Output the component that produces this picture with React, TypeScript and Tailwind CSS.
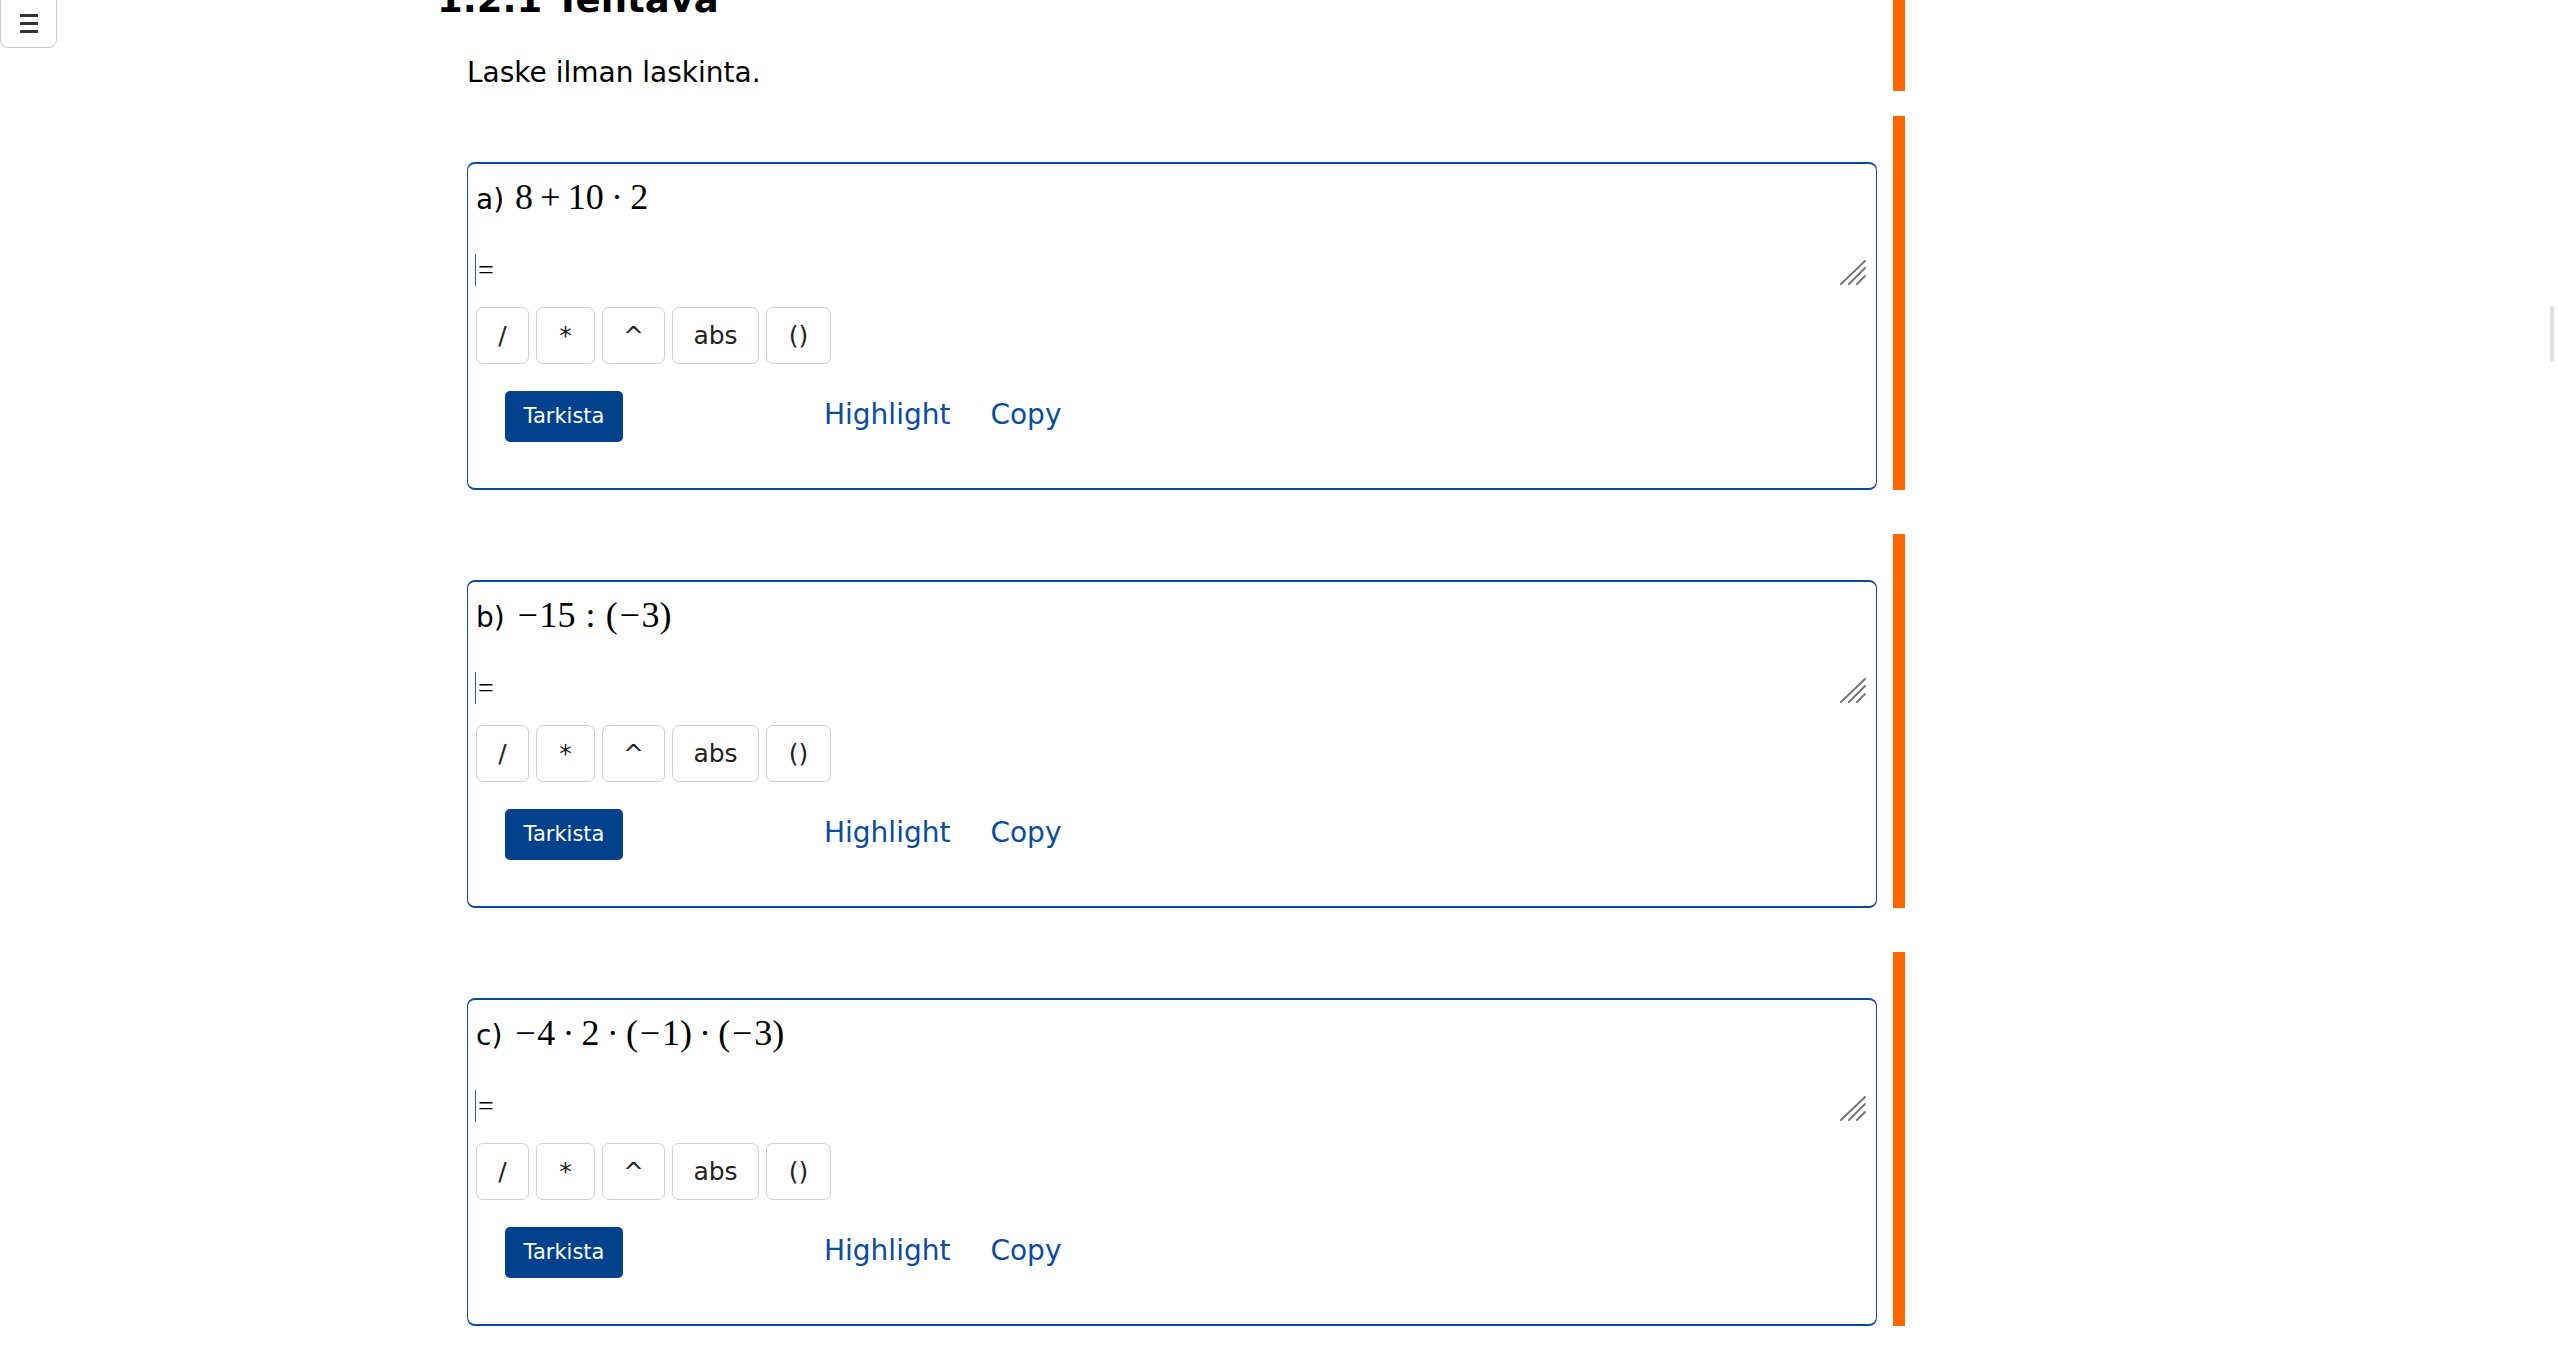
import type { ReactNode } from 'react'

const sans = { fontFamily: '"DejaVu Sans", Verdana, sans-serif' }

// binary operator with medium math spacing
function Bin({ children }: { children: ReactNode }) {
  return <span className="mx-[0.2em]">{children}</span>
}

function Rel({ children }: { children: ReactNode }) {
  return <span className="mx-[0.278em]">{children}</span>
}

function Minus() {
  return <span className="mx-[0.05em]">−</span>
}

function Grip() {
  return (
    <svg width="26" height="25" viewBox="0 0 26 25" className="block">
      <g stroke="#777" strokeWidth="2" strokeLinecap="round">
        <line x1="1" y1="24" x2="25" y2="1" />
        <line x1="9" y1="24" x2="25" y2="8" />
        <line x1="17" y1="24" x2="25" y2="16" />
      </g>
    </svg>
  )
}

const keys = [
  { k: '/', w: 'w-[53px]' },
  { k: '*', w: 'w-[59px]' },
  { k: '^', w: 'w-[63px]' },
  { k: 'abs', w: 'w-[87px]' },
  { k: '()', w: 'w-[65px]' },
]

function Exercise({ label, math, first }: { label: string; math: ReactNode; first?: boolean }) {
  return (
    <div
      className={`w-[1468px] border-r-[12px] border-[#ff6600] pt-[46px] ${first ? 'mt-[25px]' : 'mt-[44px]'}`}
    >
      <div className="ml-[30px] w-[1410px] h-[328px] border-x border-y-2 border-[#0b4a98] rounded-[8px] bg-white flex flex-col">
        {/* tehtävänanto */}
        <div className="pt-[11px] px-[8px] leading-[44px] text-[28px] text-black" style={sans}>
          {label}
          <span
            className="ml-[11px] text-[36px]"
            style={{ fontFamily: '"Liberation Serif", "Times New Roman", serif' }}
          >
            {math}
          </span>
        </div>

        {/* vastauskenttä */}
        <div className="mt-[28px] h-[40px] flex items-start justify-between pl-[7px] pr-[10px]">
          <div className="flex items-center h-[32px] mt-[4px]">
            <span className="w-[1px] h-[32px] bg-[#1a5fd0]" />
            <span
              className="ml-[2px] text-[28px] leading-none text-black"
              style={{ fontFamily: '"Liberation Serif", serif' }}
            >
              =
            </span>
          </div>
          <div className="mt-[10px]">
            <Grip />
          </div>
        </div>

        {/* näppäimet */}
        <div className="mt-[17px] pl-[8px] flex gap-[7px]" style={sans}>
          {keys.map(({ k, w }) => (
            <button
              key={k}
              className={`${w} h-[57px] flex items-center justify-center border border-[#d0d0d0] rounded-[7px] bg-white text-[25px] text-[#222]`}
            >
              {k}
            </button>
          ))}
        </div>

        <div className="mt-[27px] pl-[37px] flex items-center" style={sans}>
          <button className="w-[118px] h-[51px] rounded-[5px] bg-[#02418e] text-white text-[21px]">
            Tarkista
          </button>
          <a href="#" className="ml-[201px] mt-[-3px] text-[28px] text-[#0a4ca0]">
            Highlight
          </a>
          <a href="#" className="ml-[40px] mt-[-3px] text-[28px] text-[#0a4ca0]">
            Copy
          </a>
        </div>
      </div>
    </div>
  )
}

export default function App() {
  return (
    <div className="relative h-[1361px] overflow-hidden bg-white">
      {/* Valikko */}
      <button className="fixed top-0 left-0 w-[57px] h-[48px] border border-t-0 border-[#cccccc] rounded-b-[8px] bg-white flex flex-col items-center justify-center gap-[5px] z-10">
        <span className="w-[18px] h-[3px] bg-[#333]" />
        <span className="w-[18px] h-[3px] bg-[#333]" />
        <span className="w-[18px] h-[3px] bg-[#333]" />
      </button>

      <div className="ml-[437px] flex flex-col">
        {/* Otsikko ja ohje */}
        <div className="w-[1468px] h-[91px] flex flex-col border-r-[12px] border-[#ff6600]">
          <h2 className="mt-[-22px] text-[37px] leading-[44px] font-bold text-black" style={sans}>
            1.2.1 Tehtävä
          </h2>
          <p className="mt-[31px] pl-[30px] text-[28px] leading-[40px] text-black" style={sans}>
            Laske ilman laskinta.
          </p>
        </div>

        <Exercise
          first
          label="a)"
          math={
            <>
              8<Bin>+</Bin>10<Bin>·</Bin>2
            </>
          }
        />
        <Exercise
          label="b)"
          math={
            <>
              <Minus />
              15<Rel>:</Rel>(<Minus />3)
            </>
          }
        />
        <Exercise
          label="c)"
          math={
            <>
              <Minus />
              4<Bin>·</Bin>2<Bin>·</Bin>(<Minus />1)<Bin>·</Bin>(<Minus />3)
            </>
          }
        />
      </div>

      {/* sivun reunan vieritysmerkki */}
      <div className="absolute right-[4px] top-[306px] w-[4px] h-[56px] rounded-[2px] bg-[#e0e0e0]" />
    </div>
  )
}
